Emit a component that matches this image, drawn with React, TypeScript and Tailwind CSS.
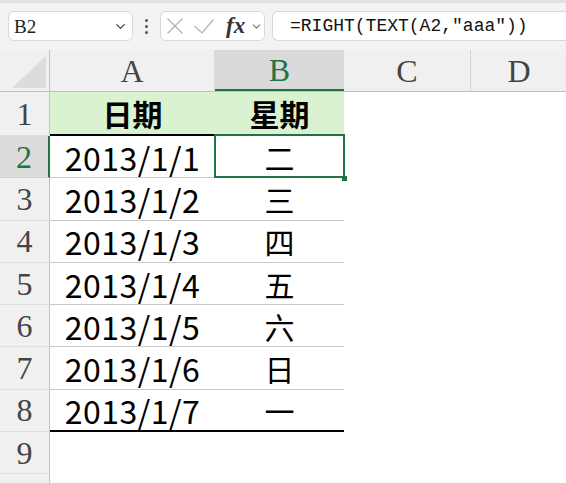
import { ChevronDown } from 'lucide-react';

const rows = [
  { a: '2013/1/1', b: '二' },
  { a: '2013/1/2', b: '三' },
  { a: '2013/1/3', b: '四' },
  { a: '2013/1/4', b: '五' },
  { a: '2013/1/5', b: '六' },
  { a: '2013/1/6', b: '日' },
  { a: '2013/1/7', b: '一' },
];

const cols = 'grid grid-cols-[50px_165px_129px_127px_1fr] grid-rows-[100%]';
const cellFont = "font-['Noto_Sans_CJK_TC','Noto_Sans_CJK_SC',sans-serif] leading-none";
const headFont = "font-['Liberation_Serif',serif] leading-none";

function RowHead({ n, active }: { n?: number; active?: boolean }) {
  return (
    <div
      className={`${headFont} flex items-center justify-center text-[32px] border-b ${
        active
          ? 'bg-[#dcdcdc] text-[#217346] border-r-2 border-r-[#217346] border-b-[#d0d0d0]'
          : 'bg-[#f0f0f0] text-[#444] border-r border-r-[#c4c4c4] border-b-[#dedede]'
      }`}
    >
      {n}
    </div>
  );
}

export default function App() {
  return (
    <div className="w-[566px] h-[483px] overflow-hidden bg-white flex flex-col">
      {/* formula bar */}
      <div className="h-[50px] shrink-0 bg-[#f3f3f3] flex flex-col">
        <div className="h-[3px] bg-[#e2e2e2]" />
        <div className="flex items-center pl-[8px] pt-[8px]">
          <div className="w-[125px] h-[30px] bg-white border border-[#d8d8d8] rounded-md flex items-center justify-between pl-[5px] pr-[4px]">
            <span className={`${headFont} text-[19px] text-[#222] mt-[1px]`}>B2</span>
            <ChevronDown className="w-[15px] h-[15px] text-[#444]" strokeWidth={2} />
          </div>
          <div className="w-[27px] flex flex-col items-center gap-[3px]">
            <span className="w-[3px] h-[3px] bg-[#555] rounded-full" />
            <span className="w-[3px] h-[3px] bg-[#555] rounded-full" />
            <span className="w-[3px] h-[3px] bg-[#555] rounded-full" />
          </div>
          <div className="w-[105px] h-[30px] bg-white border border-[#d8d8d8] rounded-md flex items-center pl-[6px]">
            <svg width="16" height="16" viewBox="0 0 16 16" className="shrink-0">
              <path d="M0.5 0.5 L15.5 15.5 M15.5 0.5 L0.5 15.5" stroke="#b0b0b0" strokeWidth="1.2" fill="none" />
            </svg>
            <svg width="20" height="15" viewBox="0 0 20 15" className="shrink-0 ml-[11px]">
              <path d="M0.5 7 L8 14 L19.5 0.5" stroke="#b0b0b0" strokeWidth="1.2" fill="none" />
            </svg>
            <span className="ml-[12px] font-['Liberation_Serif',serif] italic font-bold text-[23px] text-[#333] leading-none -mt-[2px]">fx</span>
            <ChevronDown className="w-[13px] h-[13px] text-[#777] ml-[5px]" strokeWidth={2} />
          </div>
          <div className="ml-[7px] flex-1 h-[30px] bg-white border border-[#d8d8d8] border-r-0 rounded-l-md flex items-center pl-[17px]">
            <span className="font-['Liberation_Mono',monospace] text-[18px] text-[#111]">=RIGHT(TEXT(A2,"aaa"))</span>
          </div>
        </div>
      </div>

      {/* column headers */}
      <div className={`${cols} h-[42px] shrink-0 bg-[#f0f0f0] border-b border-[#c0c0c0] ${headFont} text-[32px] text-[#444]`}>
        <div className="border-r border-[#c4c4c4] relative">
          <svg className="absolute left-[12px] top-[6px]" width="34" height="32" viewBox="0 0 34 32">
            <polygon points="0,32 34,0 34,32" fill="#dcdcdc" />
          </svg>
        </div>
        <div className="flex items-center justify-center border-r border-[#dadada]">A</div>
        <div className="flex items-center justify-center bg-[#dadada] text-[#217346] border-b-2 border-[#217346]">B</div>
        <div className="flex items-center justify-center border-r border-[#d4d4d4]">C</div>
        <div className="flex items-center justify-center pl-[1px]">D</div>
      </div>

      {/* row 1 */}
      <div className={`${cols} h-[44px] shrink-0`}>
        <RowHead n={1} />
        <div className={`${cellFont} bg-[#daf2d0] border-b-2 border-black flex items-center justify-center text-[30px] font-bold text-black`}>日期</div>
        <div className={`${cellFont} bg-[#daf2d0] border-b-2 border-black flex items-center justify-center text-[30px] font-bold text-black`}>星期</div>
        <div />
        <div />
      </div>

      {/* data rows */}
      {rows.map((r, i) => {
        const last = i === rows.length - 1;
        const line = last ? 'border-b-2 border-black' : 'border-b border-[#c8c8c8]';
        return (
          <div key={r.a} className={`${cols} h-[42.3px] shrink-0`}>
            <RowHead n={i + 2} active={i === 0} />
            <div className={`${cellFont} ${line} flex items-center justify-center text-[32px] text-black tracking-[0.5px]`}>{r.a}</div>
            <div className={`${cellFont} ${line} relative flex items-center justify-center text-[30px] text-black`}>
              {r.b}
              {i === 0 && (
                <>
                  <div className="absolute -left-[1px] -top-[2px] -right-[1px] -bottom-[1px] border-2 border-[#217346]" />
                  <div className="absolute -right-[3px] -bottom-[4px] w-[5px] h-[5px] bg-[#217346]" />
                </>
              )}
            </div>
            <div />
            <div />
          </div>
        );
      })}

      {/* row 9 and the top of row 10 */}
      <div className={`${cols} h-[42.3px] shrink-0`}>
        <RowHead n={9} />
        <div />
        <div />
        <div />
        <div />
      </div>
      <div className={`${cols} h-[42.3px] shrink-0`}>
        <RowHead />
        <div />
        <div />
        <div />
        <div />
      </div>
    </div>
  );
}
